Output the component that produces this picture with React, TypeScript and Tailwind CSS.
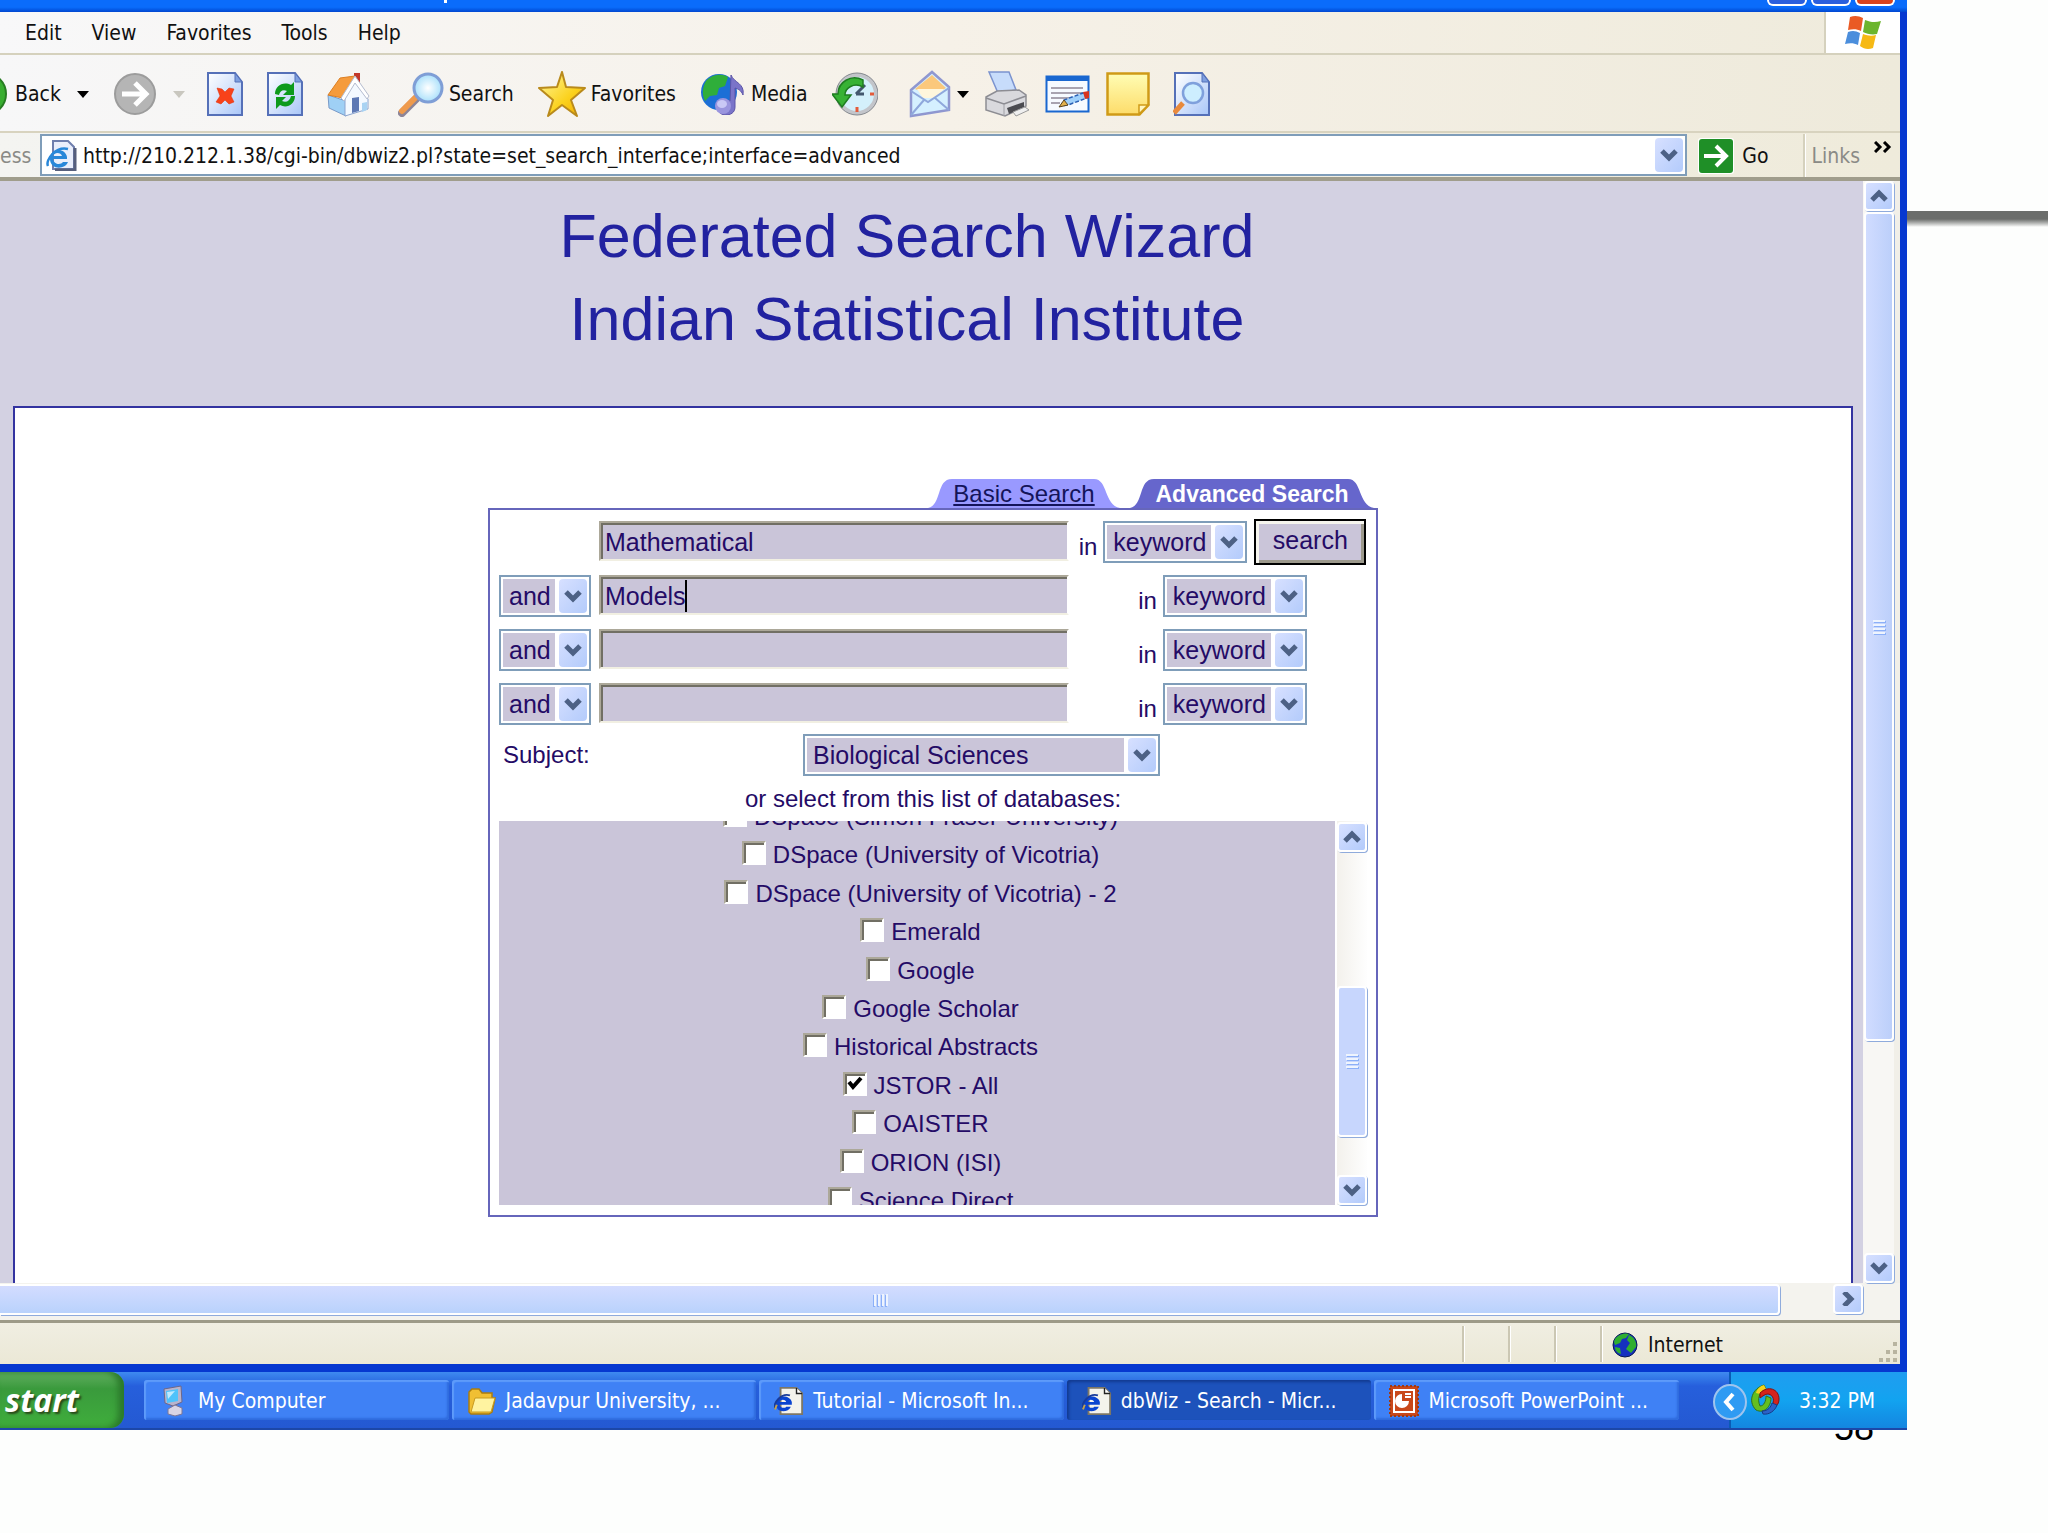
import React from "react";

/* ---------- small drawings ---------- */

const Caret = ({ color = "#000" }: { color?: string }) => (
  <svg width="12" height="7" viewBox="0 0 12 7" aria-hidden="true"><path d="M0 0h12L6 7z" fill={color} /></svg>
);

const chevrons = {
  down: "M2 3l7 7 7-7",
  up: "M2 11l7-7 7 7",
  right: "M5 0l7 7-7 7",
};

const Chevron = ({ dir }: { dir: "down" | "up" | "right" }) => (
  <svg width="18" height="14" viewBox="0 0 18 14" aria-hidden="true">
    <path d={chevrons[dir]} fill="none" stroke="#4d6185" strokeWidth="5" />
  </svg>
);

const Doc = ({ children }: { children?: React.ReactNode }) => (
  <svg width="38" height="46" viewBox="0 0 38 46" aria-hidden="true">
    <defs>
      <linearGradient id="doc" x1="0" y1="0" x2="1" y2="1">
        <stop offset="0" stopColor="#fff" /><stop offset="1" stopColor="#a9c6f8" />
      </linearGradient>
    </defs>
    <path d="M2 2h27l7 9v33H2z" fill="url(#doc)" stroke="#5570b8" strokeWidth="2" />
    <path d="M29 2v9h7z" fill="#7e9fe0" stroke="#5570b8" />
    {children}
  </svg>
);

const StopIcon = () => (
  <Doc><path d="M11 17l5 1 3 3 4-4 5 1-3 7 3 6-5 2-4-4-4 4-5-2 4-6z" fill="#f8421a" stroke="#e02800" strokeWidth=".5" /></Doc>
);

const RefreshIcon = () => (
  <Doc>
    <path d="M9 23c0-8 8-13 16-9l3-3v13H17l4-4c-4-2-7 0-8 4z" fill="#0d9a1c" />
    <path d="M29 25c0 8-8 13-15 9l-4 4V26h10l-4 4c4 2 8 0 9-5z" fill="#0d9a1c" />
  </Doc>
);

const HomeIcon = () => (
  <svg width="44" height="46" viewBox="0 0 44 46" aria-hidden="true">
    <path d="M28 2h6v12l-6-5z" fill="#c2382b" />
    <path d="M2 24l18 6v15L3 37z" fill="#9fd0f5" stroke="#7a9ac8" />
    <path d="M28 9l14 19v10l-23 7V27z" fill="#f4f9ff" stroke="#8aa4cf" />
    <path d="M14 7l15-2-12 22-15-3z" fill="#f59b3c" stroke="#dd7f22" />
    <path d="M29 5l14 20-2 3-12-16-11 18-3-3z" fill="#fff" stroke="#b4bccf" />
    <path d="M26 27l7-1v14l-7 2z" fill="#5d78b4" />
    <path d="M36 32l5-1v8l-5 2z" fill="#a9d3f3" />
  </svg>
);

const Lens = () => (
  <svg width="46" height="46" viewBox="0 0 46 46" aria-hidden="true">
    <defs>
      <radialGradient id="lens"><stop offset="0" stopColor="#fff" /><stop offset="1" stopColor="#a9e0fb" /></radialGradient>
    </defs>
    <path d="M4 42L18 28" stroke="#8d8598" strokeWidth="8" strokeLinecap="round" />
    <path d="M4 40L17 27" stroke="#ef9a4c" strokeWidth="6" strokeLinecap="round" />
    <circle cx="30" cy="17" r="14" fill="url(#lens)" stroke="#7f9ed6" strokeWidth="3" />
  </svg>
);

const StarIcon = () => (
  <svg width="48" height="46" viewBox="0 0 48 46" aria-hidden="true">
    <defs>
      <linearGradient id="star" x1="0" y1="0" x2="1" y2="1">
        <stop offset="0" stopColor="#fff7a0" /><stop offset=".6" stopColor="#fbd21e" /><stop offset="1" stopColor="#f0a800" />
      </linearGradient>
    </defs>
    <path d="M24 1l4 15 19 1-14 12 6 16-15-11-14 11 5-16L1 17l18-1z" fill="url(#star)" stroke="#b98a1c" strokeWidth="2" strokeLinejoin="round" />
  </svg>
);

const MediaIcon = () => (
  <svg width="46" height="42" viewBox="0 0 46 42" aria-hidden="true">
    <circle cx="19" cy="19" r="18" fill="#1c6fd6" />
    <path d="M6 8c6-7 16-8 22-4l-3 9-6 2-2 7-7 1-5 5c-3-6-3-13 1-20z" fill="#2fae3a" />
    <path d="M31 2c3 8 14 8 12 20-2-5-5-6-8-7v19c0 6-5 8-9 8-9 0-11-9-5-13 3-2 7-2 9-1z" fill="#7a74c9" stroke="#5b54a8" />
    <circle cx="23" cy="33" r="8" fill="#9a95de" />
    <ellipse cx="22" cy="31" rx="5" ry="4" fill="#c9c8f5" />
  </svg>
);

const HistoryIcon = () => (
  <svg width="46" height="46" viewBox="0 0 46 46" aria-hidden="true">
    <circle cx="25" cy="23" r="19" fill="#d4f0fb" stroke="#c3c5ca" strokeWidth="4" />
    <circle cx="25" cy="23" r="21" fill="none" stroke="#85898f" />
    <path d="M24 23l9-9M24 23h8" stroke="#44586e" strokeWidth="3" />
    <path d="M25 36v5M38 23h4" stroke="#e35b3a" strokeWidth="3" />
    <path d="M31 9C19 3 6 11 6 23H0l10 13 9-12h-6c0-7 9-13 18-8z" fill="#37b234" stroke="#1f7d21" strokeWidth="1.500" />
  </svg>
);

const MailIcon = () => (
  <svg width="42" height="48" viewBox="0 0 42 48" aria-hidden="true">
    <path d="M2 20L23 2l17 15v23L2 46z" fill="#d5f0ff" stroke="#8f97d0" strokeWidth="2.500" />
    <path d="M6 19L23 5l14 13-14 8z" fill="#fbc87c" />
    <path d="M8 19h27l-9 9H14z" fill="#fff6dc" />
    <path d="M2 21l17 11 21-14M2 45l13-15M40 40L26 28" fill="none" stroke="#8fa8dc" strokeWidth="2" />
  </svg>
);

const PrinterIcon = () => (
  <svg width="46" height="48" viewBox="0 0 46 48" aria-hidden="true">
    <path d="M5 2h20l7 18-18 3z" fill="#c7dcfb" stroke="#7b93cf" strokeWidth="1.500" />
    <path d="M2 27l11-6 22-1 7 5v11l-21 10L2 40z" fill="#d9d9dd" stroke="#8d8d93" strokeWidth="1.500" />
    <path d="M2 28l18 6 22-8" fill="none" stroke="#8d8d93" strokeWidth="1.500" />
    <path d="M20 34v12" stroke="#a0a0a6" />
    <path d="M23 38l17-6v5l-15 7z" fill="#4b4b50" />
    <path d="M29 42l12-5 4 3-13 6z" fill="#efefef" stroke="#9a9a9a" />
  </svg>
);

const EditIcon = () => (
  <svg width="46" height="38" viewBox="0 0 46 38" aria-hidden="true">
    <rect x="1.500" y="1.500" width="42" height="35" fill="#f6faff" stroke="#1967d0" strokeWidth="2" />
    <path d="M1 1h43v5H1z" fill="#1967d0" />
    <path d="M6 13h32M6 18h32M6 23h20M6 28h9" stroke="#8e8796" strokeWidth="1.500" />
    <path d="M16 31l3-6 19-7 4 5-19 7z" fill="#9fd0fb" stroke="#2a5fb3" strokeWidth="1.500" strokeDasharray="4 2" />
    <path d="M14 32l5-7 4 5z" fill="#e3b24d" stroke="#5c4620" />
    <path d="M38 17l6-1v7l-4 1z" fill="#d8331f" />
  </svg>
);

const NoteIcon = () => (
  <svg width="44" height="44" viewBox="0 0 44 44" aria-hidden="true">
    <defs>
      <linearGradient id="note" x1="0" y1="0" x2="0" y2="1"><stop offset="0" stopColor="#fffdb4" /><stop offset="1" stopColor="#fddc6a" /></linearGradient>
    </defs>
    <path d="M1.500 1.500h41V33l-9 9.500h-32z" fill="url(#note)" stroke="#cf9a17" strokeWidth="2.500" />
    <path d="M42 33h-9v9z" fill="#fff6c0" stroke="#cf9a17" strokeWidth="1.500" />
  </svg>
);

const ResearchIcon = () => (
  <Doc>
    <path d="M1 42l9-10" stroke="#e8893c" strokeWidth="5" />
    <circle cx="20" cy="22" r="10" fill="#cdeeff" stroke="#7fa0dc" strokeWidth="2.500" />
  </Doc>
);

const IePage = () => (
  <svg width="32" height="32" viewBox="0 0 32 32" aria-hidden="true">
    <path d="M7 2h15l6 6v22H7z" fill="#e9eefb" stroke="#6f7fae" strokeWidth="2" />
    <path d="M29 9v22H9" fill="none" stroke="#565f7c" strokeWidth="3" />
    <path d="M17 20H7c1 6 8 6 10 3h5c-3 8-18 8-18-3S19 8 21 18v2zM7 17h9c-1-4-8-4-9 0z" fill="#2887d9" />
    <path d="M2 27c-3-6 8-20 20-17" fill="none" stroke="#2887d9" strokeWidth="2.500" />
  </svg>
);

const IeTask = () => (
  <svg width="32" height="32" viewBox="0 0 32 32" aria-hidden="true">
    <path d="M7 2h17l6 6v22H7z" fill="#f4f3ec" stroke="#7d7765" strokeWidth="2" />
    <path d="M24 2v6h6" fill="#fff" stroke="#222" strokeWidth="1.500" />
    <path d="M14 20H6c1 4 6 4 7 2h5c-3 7-16 7-16-3S17 9 19 17v3zM6 17h7c-1-3-6-3-7 0z" fill="#0a44d0" />
    <path d="M1 24c-2-6 7-17 16-14" fill="none" stroke="#183b9a" strokeWidth="2" />
    <path d="M1 25l2-5" stroke="#c7a24a" strokeWidth="2" />
  </svg>
);

const WindowsFlag = () => (
  <svg width="40" height="36" viewBox="0 0 40 36" aria-hidden="true">
    <path d="M7 2c5-2 9-1 13 1l-2 13c-4-2-8-2-13-1z" fill="#ea5a24" />
    <path d="M22 5c5 2 10 3 16 1l-4 13c-5 1-10 0-14-2z" fill="#6cb52d" />
    <path d="M5 17c5-2 8-1 12 1l-2 12c-4-2-8-2-13-1z" fill="#4b8edc" />
    <path d="M20 19c5 2 9 2 13 1l-3 13c-5 2-9 1-13-2z" fill="#f6b914" />
  </svg>
);

const GlobeIcon = () => (
  <svg width="26" height="26" viewBox="0 0 26 26" aria-hidden="true">
    <circle cx="13" cy="13" r="12" fill="#1530c0" stroke="#0a1a50" />
    <path d="M2 10c1-6 9-10 15-8l-3 4-4 1-2 4-5 2zM17 3c5 2 8 7 7 12l-5 6-5-4 4-6-3-3zM3 15l5 1 1 6c-4-1-6-4-6-7z" fill="#2fae2f" />
  </svg>
);

const ComputerIcon = () => (
  <svg width="28" height="32" viewBox="0 0 28 32" aria-hidden="true">
    <path d="M4 4l17-3 1 16-9 4-8-3z" fill="#b9b4cc" stroke="#6d6789" />
    <path d="M6 6l12-2v12l-11 2z" fill="#4fc3fb" />
    <path d="M7 7l8-1-7 8z" fill="#bfeaff" />
    <path d="M8 24l7-4 7 3v6l-7 2-7-2z" fill="#d9d5e4" stroke="#7d7796" />
  </svg>
);

const FolderIcon = () => (
  <svg width="30" height="28" viewBox="0 0 30 28" aria-hidden="true">
    <path d="M2 5l3-3h7l3 4h10v5h3l-3 14-3 2H4l-2-2z" fill="#f0bf33" stroke="#a97c10" strokeWidth="1.500" />
    <path d="M8 11h20l-4 14H4z" fill="#fff3a0" stroke="#c99a1f" />
  </svg>
);

const PowerPointIcon = () => (
  <svg width="30" height="32" viewBox="0 0 30 32" aria-hidden="true">
    <rect x="1" y="1" width="28" height="30" fill="#c9481a" stroke="#a2390f" strokeWidth="2" strokeDasharray="2 2" />
    <rect x="5" y="5" width="20" height="22" fill="none" stroke="#fff" strokeWidth="2" />
    <path d="M13 9v7h7a7 7 0 1 1-7-7z" fill="#fff" />
    <path d="M16 9h6M16 12h6" stroke="#fff" strokeWidth="2" />
  </svg>
);

const TrayIcon = () => (
  <svg width="30" height="32" viewBox="0 0 30 32" aria-hidden="true">
    <path d="M6 26C-3 17 3 4 14 1l2 4C9 8 7 15 10 22c4 0 6-5 6-10l5 2c0 9-7 16-15 12z" fill="#63bf1f" stroke="#33701a" />
    <path d="M6 9c1-4 4-7 8-8l2 4c-3 1-5 3-6 5z" fill="#f4d21c" />
    <path d="M10 9c8-8 19-4 19 6 0 6-4 9-8 9 4-7 3-13-3-14-3 0-5 2-8 4z" fill="#d5231c" stroke="#86100c" />
    <path d="M27 21c-2 6-8 10-14 9l-1-3c6 0 9-4 10-8z" fill="#2b62c8" stroke="#163a86" />
  </svg>
);

/* ---------- shared controls ---------- */

const ArrowFace = () => (
  <span aria-hidden="true" className="flex w-7 shrink-0 items-center justify-center rounded-sm bg-linear-to-br from-[#d7e0ff] to-[#b3cbfb]">
    <Chevron dir="down" />
  </span>
);

function Select({ label, value, width }: { label: string; value: string; width: string }) {
  return (
    <span className={"flex h-[42px] border-2 border-[#7f9db9] bg-white p-[2px] " + width}>
      <select aria-label={label} className="mr-1 min-w-0 flex-1 appearance-none bg-[#cac5d9] pl-[6px] text-[25px] leading-8 outline-none">
        <option>{value}</option>
      </select>
      <ArrowFace />
    </span>
  );
}

function TextBox({ label, value, caret }: { label: string; value: string; caret?: boolean }) {
  return (
    <span className="relative flex w-[470px]">
      <input
        aria-label={label}
        defaultValue={value}
        className="h-10 w-full border-2 border-t-[#aca899] border-r-white border-b-[#f1efe2] border-l-[#aca899] bg-[#cac5d9] pt-[2px] pl-1 text-[25px] leading-8 shadow-[inset_2px_2px_0_#716f64] outline-none"
      />
      {caret && <i className="absolute top-[5px] left-[86px] h-8 w-[2px] bg-black" />}
    </span>
  );
}

const ScrollButton = ({ dir, label }: { dir: "down" | "up" | "right"; label: string }) => (
  <button aria-label={label} className="flex size-[30px] shrink-0 items-center justify-center rounded border-2 border-white bg-linear-to-br from-[#d7e0ff] to-[#b3cbfb] shadow-[1px_1px_0_#8fabdc]">
    <Chevron dir={dir} />
  </button>
);

const Grip = () => (
  <span className="flex flex-col gap-[2px]">
    {[0, 1, 2, 3].map((i) => <i key={i} className="h-[2px] w-3 bg-[#eef4fe] shadow-[1px_1px_0_#8cb0f8]" />)}
  </span>
);

/* ---------- browser chrome ---------- */

const TitleBar = () => (
  <div className="flex h-3 items-start gap-1 overflow-hidden bg-linear-to-b from-[#0a6cfb] from-60% to-[#0347d0] pr-3">
    <i className="ml-[444px] h-[3px] w-[3px] bg-white" />
    <span className="flex-1" />
    <i className="h-[6px] w-10 rounded-b-md border-2 border-t-0 border-white bg-[#2a5fdd]" />
    <i className="h-[6px] w-10 rounded-b-md border-2 border-t-0 border-white bg-[#2a5fdd]" />
    <i className="h-[6px] w-10 rounded-b-md border-2 border-t-0 border-white bg-[#d9431c]" />
  </div>
);

const MenuBar = () => (
  <nav className="flex h-[43px] items-stretch border-b-2 border-[#d5d1bd] bg-linear-to-r from-[#f8f8f9] via-[#f6f1e8] to-[#efebdc]">
    <div className="flex flex-1 items-center gap-[30px] pl-[25px]">
      {["Edit", "View", "Favorites", "Tools", "Help"].map((t) => <button key={t}>{t}</button>)}
    </div>
    <div className="flex w-[76px] items-center justify-center border-l-2 border-[#d5d1bd] bg-white"><WindowsFlag /></div>
  </nav>
);

const Divider = () => <i className="h-[67px] w-[2px] bg-[#cfcab0]" />;

const Tool = ({ icon, text }: { icon: React.ReactNode; text?: string }) => (
  <button className="flex items-center gap-[5px]" aria-label={text ? undefined : "Toolbar button"}>{icon}{text}</button>
);

const Toolbar = () => (
  <div className="flex h-[78px] items-center border-b-2 border-[#d8d3bf] bg-linear-to-r from-[#f7f7f8] via-[#f6f1e8] to-[#eeeadb] pt-[2px]">
    <button className="flex items-center gap-2">
      <svg width="7" height="44" viewBox="0 0 7 44" aria-hidden="true"><circle cx="-15" cy="22" r="21" fill="#38ad30" stroke="#277c22" strokeWidth="2" /></svg>
      Back
    </button>
    <span className="ml-4"><Caret /></span>
    <button aria-label="Forward" className="ml-6">
      <svg width="44" height="44" viewBox="0 0 44 44" aria-hidden="true">
        <circle cx="22" cy="22" r="20" fill="#b5b5b5" stroke="#9c9c9c" strokeWidth="2" />
        <path d="M9 22h22M22 11l11 11-11 11" fill="none" stroke="#fff" strokeWidth="5" />
      </svg>
    </button>
    <span className="ml-4"><Caret color="#c9c7bf" /></span>
    <div className="ml-[21px] flex items-center gap-[22px]">
      <Tool icon={<StopIcon />} />
      <Tool icon={<RefreshIcon />} />
      <Tool icon={<HomeIcon />} />
    </div>
    <div className="mr-[13px] ml-[15px]"><Divider /></div>
    <div className="flex items-center gap-6">
      <Tool icon={<Lens />} text="Search" />
      <Tool icon={<StarIcon />} text="Favorites" />
      <Tool icon={<MediaIcon />} text="Media" />
      <Tool icon={<HistoryIcon />} />
    </div>
    <div className="mr-[17px] ml-[14px]"><Divider /></div>
    <div className="flex items-center gap-[15px]">
      <span className="flex items-center gap-[6px]"><Tool icon={<MailIcon />} /><Caret /></span>
      <Tool icon={<PrinterIcon />} />
      <Tool icon={<EditIcon />} />
      <Tool icon={<NoteIcon />} />
      <span className="ml-2 flex"><Tool icon={<ResearchIcon />} /></span>
    </div>
  </div>
);

const AddressBar = () => (
  <div className="flex h-12 items-stretch border-b-4 border-[#a09d8c] bg-linear-to-r from-[#f4f4f1] to-[#efebdb] pt-[1px]">
    <label htmlFor="url" className="flex w-10 items-center text-[#8a8a86]">ess</label>
    <div className="mb-[1px] flex flex-1 items-center border-2 border-[#7f9db9] bg-white py-[2px] pr-[2px] pl-[4px]">
      <IePage />
      <input id="url" className="ml-[5px] min-w-0 flex-1 bg-transparent pt-[2px] outline-none" defaultValue="http://210.212.1.38/cgi-bin/dbwiz2.pl?state=set_search_interface;interface=advanced" />
      <button aria-label="Show addresses" className="flex self-stretch"><ArrowFace /></button>
    </div>
    <button className="ml-[11px] flex items-center gap-2">
      <svg width="36" height="36" viewBox="0 0 36 36" aria-hidden="true">
        <rect width="36" height="36" rx="3" fill="#fff" /><rect x="1" y="1" width="34" height="34" rx="3" fill="#1f8f27" />
        <path d="M6 18h20M18 8l10 10-10 10" fill="none" stroke="#fff" strokeWidth="4" />
      </svg>
      Go
    </button>
    <i className="ml-[35px] w-[3px] border-l-2 border-[#d5d1bd] bg-white" />
    <span className="ml-[5px] flex items-center text-[#8a8a86]">Links</span>
    <svg className="mt-[7px] mr-[8px] ml-[14px]" width="18" height="12" viewBox="0 0 18 12" aria-hidden="true">
      <path d="M1 1l5 5-5 5M10 1l5 5-5 5" fill="none" stroke="#000" strokeWidth="3" />
    </svg>
  </div>
);

/* ---------- search page ---------- */

function Tab({ text, active }: { text: string; active?: boolean }) {
  return (
    <a href="#" className={"relative flex h-[29px] items-center justify-center " + (active ? "w-[244px] text-[23px] font-bold text-white" : "w-[192px] text-[24px] text-[#14145a] underline")}>
      <svg className="absolute inset-0 h-full w-full" viewBox={active ? "0 0 244 29" : "0 0 192 29"} aria-hidden="true">
        {active
          ? <path d="M0 29C14 26 8 0 24 0h194c14 0 10 26 26 29z" fill="#6666cc" />
          : <path d="M0 29C14 26 8 0 24 0h142c14 0 10 26 26 29z" fill="#9999ff" />}
      </svg>
      <span className="relative">{text}</span>
    </a>
  );
}

const terms = ["Mathematical", "Models", "", ""];

const databases = [
  "DSpace (Simon Fraser University)", "DSpace (University of Vicotria)", "DSpace (University of Vicotria) - 2",
  "Emerald", "Google", "Google Scholar", "Historical Abstracts", "JSTOR - All", "OAISTER", "ORION (ISI)", "Science Direct",
];

const DatabaseList = () => (
  <div className="mt-2 flex gap-[2px]">
    <div className="h-[384px] flex-1 overflow-hidden bg-[#cac5d9]">
      <ul className="-mt-[23px] flex h-[422px] flex-col items-center justify-between">
        {databases.map((d) => (
          <li key={d}>
            <label className="flex h-[38px] items-center gap-[7px] pl-[7px]">
              <input
                type="checkbox"
                defaultChecked={d.startsWith("JSTOR")}
                className="peer mb-1 size-6 appearance-none border-2 border-t-[#aca899] border-r-white border-b-white border-l-[#aca899] bg-white shadow-[inset_2px_2px_0_#716f64]"
              />
              <svg className="-mr-[25px] hidden -translate-x-[28px] -translate-y-[2px] peer-checked:block" width="18" height="18" viewBox="0 0 18 18" aria-hidden="true">
                <path d="M3 7l4 5 8-9" fill="none" stroke="#000" strokeWidth="4" />
              </svg>
              {d}
            </label>
          </li>
        ))}
      </ul>
    </div>
    <div className="flex w-[30px] flex-col items-center bg-linear-to-r from-[#f3f1ec] to-[#fefefe] pt-[1px]">
      <ScrollButton dir="up" label="Scroll list up" />
      <span className="flex-[134]" />
      <div className="flex w-[30px] flex-[148] items-center justify-center rounded border-2 border-white bg-[#c7d6fd] shadow-[1px_1px_0_#8fabdc]"><Grip /></div>
      <span className="flex-[38]" />
      <ScrollButton dir="down" label="Scroll list down" />
    </div>
  </div>
);

const SearchForm = () => (
  <div className="mx-auto w-[890px] pt-[71px] pb-[66px]">
    <div className="flex justify-end gap-[10px] pr-1">
      <Tab text="Basic Search" />
      <Tab text="Advanced Search" active />
    </div>
    <form className="border-2 border-[#6666bb] px-[9px] pt-[9px] pb-[10px]" onSubmit={(e) => e.preventDefault()}>
      <div className="flex flex-col gap-3">
        {terms.map((t, i) => (
          <div key={i} className={"flex items-start " + (i === 0 ? "-mb-[2px]" : "")}>
            <div className="mr-2 w-[92px]">{i > 0 && <Select label={"Operator " + i} value="and" width="w-full" />}</div>
            <div className={i === 0 ? "mt-[2px]" : ""}><TextBox label={"Term " + (i + 1)} value={t} caret={i === 1} /></div>
            <div className="ml-[9px] flex flex-1 items-center justify-center gap-[7px]">
              <span className="flex items-end gap-[6px]">
                <span className="pb-[2px]">in</span>
                <Select label={"Field " + (i + 1)} value="keyword" width="w-[144px]" />
              </span>
              {i === 0 && (
                <button className="h-[46px] w-28 border-2 border-black bg-[#cac5d9] pb-1 text-[25px] shadow-[inset_3px_3px_0_#f6f5ee,inset_-3px_-3px_0_#9c998c]">search</button>
              )}
            </div>
          </div>
        ))}
      </div>
      <div className="mt-[9px] flex items-center">
        <label className="w-[304px] pl-1">Subject:</label>
        <Select label="Subject" value="Biological Sciences" width="w-[357px]" />
      </div>
      <p className="mt-[9px] text-center">or select from this list of databases:</p>
      <DatabaseList />
    </form>
  </div>
);

const Page = () => (
  <div className="flex bg-[#f1efe8] pr-[6px] font-['Liberation_Sans',Arial,sans-serif] text-[24px] leading-7 text-[#240b66]">
    <main className="flex-1 bg-[#d3d1e2] pr-[10px] pl-[13px]">
      <h1 className="pt-[14px] pb-[45px] pr-[52px] text-center text-[61px] leading-[83px] text-[#2222a0]">
        Federated Search Wizard<br />Indian Statistical Institute
      </h1>
      <section className="border-2 border-b-0 border-[#3333a0] bg-white"><SearchForm /></section>
    </main>
    <div className="flex w-[31px] flex-col items-center bg-[#f8f7f4]">
      <ScrollButton dir="up" label="Scroll page up" />
      <div className="mt-[1px] flex w-[30px] flex-[829] items-center justify-center rounded border-2 border-white bg-linear-to-r from-[#d0dcff] to-[#bccffa] shadow-[1px_1px_0_#8fabdc]"><Grip /></div>
      <span className="flex-[213]" />
      <ScrollButton dir="down" label="Scroll page down" />
    </div>
  </div>
);

const BottomScroll = () => (
  <div className="flex h-[37px] items-start bg-[#f4f3ee] pt-[1px] pr-[37px]">
    <div className="flex h-[31px] flex-[1777] items-center justify-center rounded-r border-2 border-l-0 border-white bg-linear-to-b from-[#d3dcff] to-[#b9d2fc] pr-5 shadow-[1px_1px_0_#8fabdc]">
      <span className="-mr-1 flex rotate-90 flex-col"><Grip /></span>
    </div>
    <span className="flex-[54]" />
    <ScrollButton dir="right" label="Scroll page right" />
  </div>
);

const StatusBar = () => (
  <div className="flex h-[44px] items-center justify-end border-t-[3px] border-[#9d9a88] bg-linear-to-b from-[#f0eee2] to-[#ebe8d6]">
    <div className="flex h-[36px] gap-[43px]">
      {[0, 1, 2, 3].map((i) => <i key={i} className="w-[3px] border-l-2 border-[#cbc7b3] bg-white" />)}
    </div>
    <div className="flex w-[297px] items-center gap-[10px] pt-[2px] pl-[9px]"><GlobeIcon />Internet</div>
    <svg className="-ml-6 self-end" width="24" height="24" viewBox="0 0 24 24" aria-hidden="true">
      <path d="M3 20h4M10 20h4M17 20h4M10 12h4M17 12h4M17 4h4" stroke="#b8b4a0" strokeWidth="4" />
    </svg>
  </div>
);

/* ---------- taskbar ---------- */

const tasks = [
  { text: "My Computer", icon: <ComputerIcon /> },
  { text: "Jadavpur University, ...", icon: <FolderIcon /> },
  { text: "Tutorial - Microsoft In...", icon: <IeTask /> },
  { text: "dbWiz - Search - Micr...", icon: <IeTask />, active: true },
  { text: "Microsoft PowerPoint ...", icon: <PowerPointIcon /> },
];

const Taskbar = () => (
  <footer className="flex h-[58px] items-stretch border-b-2 border-[#1c47a8] bg-linear-to-b from-[#3f8af0] via-[#265fdc] via-25% to-[#2459d2] text-white">
    <button className="w-[124px] rounded-r-[14px] bg-linear-to-b from-[#5fae5f] via-[#3a9a3c] via-30% to-[#3fae3c] pl-[5px] text-left font-['Open_Sans',sans-serif] text-[32px] leading-8 font-bold italic shadow-[inset_-6px_0_6px_#2b7a2b] [text-shadow:2px_2px_2px_#2a4a1a]">start</button>
    <div className="flex flex-1 gap-[3px] py-[8px] pr-[50px] pl-5">
      {tasks.map((t) => (
        <button
          key={t.text}
          className={"flex flex-1 items-center gap-[9px] rounded-[3px] pt-[2px] pl-[15px] whitespace-nowrap " + (t.active ? "bg-[#1d52bb] shadow-[inset_2px_2px_3px_#123a90]" : "bg-[#3f81f5] shadow-[inset_2px_2px_1px_#5e9bfa,inset_-2px_-2px_2px_#2f6bdd]")}
        >
          <span className="flex w-[30px] justify-center">{t.icon}</span>
          {t.text}
        </button>
      ))}
    </div>
    <div className="relative flex w-[178px] items-center border-l-2 border-[#0b5bb5] bg-linear-to-b from-[#1f9df0] via-[#12a3f0] via-50% to-[#1486e0] pl-[19px]">
      <button aria-label="Show hidden icons" className="absolute top-[11px] -left-[19px]">
        <svg width="36" height="38" viewBox="0 0 36 38" aria-hidden="true">
          <ellipse cx="18" cy="19" rx="16" ry="17" fill="#2f9bf3" stroke="#9fc4ee" strokeWidth="2" />
          <path d="M21 11l-7 8 7 8" fill="none" stroke="#fff" strokeWidth="4" />
        </svg>
      </button>
      <TrayIcon />
      <time className="ml-[19px] pt-[2px]">3:32 PM</time>
    </div>
  </footer>
);

export default function App() {
  return (
    <div className="min-h-screen bg-[#fdfefd] font-['DejaVu_Sans_Condensed','Noto_Sans',sans-serif] text-[21px] leading-6 text-[#111]">
      <div className="flex">
        <div className="min-w-0 flex-1">
          <div className="border-r-7 border-b-8 border-[#0638d0]">
            <div className="-mr-[7px]"><TitleBar /></div>
            <MenuBar />
            <Toolbar />
            <AddressBar />
            <Page />
            <BottomScroll />
            <StatusBar />
          </div>
          <Taskbar />
          <div className="flex h-3 items-end justify-end overflow-hidden pr-[33px] font-['Liberation_Sans',Arial,sans-serif] text-[36px] leading-7 text-black">58</div>
        </div>
        <aside className="w-[141px] shrink-0 pt-[211px]">
          <div className="h-4 bg-linear-to-b from-[#6b6d6b] from-50% to-[#fdfefd]" />
        </aside>
      </div>
    </div>
  );
}
